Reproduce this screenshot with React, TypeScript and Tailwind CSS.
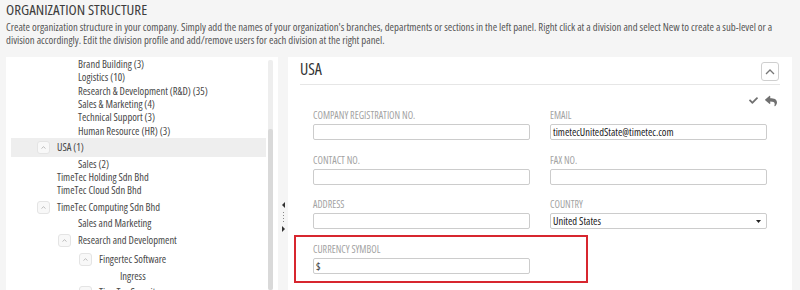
import React from "react";
import { FaCheck, FaReply } from "react-icons/fa";

type Row = {
  label: string;
  h: string;
  pad: string;
  toggle?: boolean;
  active?: boolean;
};

const rows: Row[] = [
  { label: "Brand Building (3)", h: "h-[13px]", pad: "pl-[67px]" },
  { label: "Logistics (10)", h: "h-[13px]", pad: "pl-[67px]" },
  { label: "Research & Development (R&D) (35)", h: "h-[14px]", pad: "pl-[67px]" },
  { label: "Sales & Marketing (4)", h: "h-[13px]", pad: "pl-[67px]" },
  { label: "Technical Support (3)", h: "h-[13px]", pad: "pl-[67px]" },
  { label: "Human Resource (HR) (3)", h: "h-[14px]", pad: "pl-[67px]" },
  { label: "USA (1)", h: "h-[19px]", pad: "pl-[26px]", toggle: true, active: true },
  { label: "Sales (2)", h: "h-[14px]", pad: "pl-[67px]" },
  { label: "TimeTec Holding Sdn Bhd", h: "h-[13px]", pad: "pl-[46px]" },
  { label: "TimeTec Cloud Sdn Bhd", h: "h-[13px]", pad: "pl-[46px]" },
  { label: "TimeTec Computing Sdn Bhd", h: "h-[20px]", pad: "pl-[26px]", toggle: true },
  { label: "Sales and Marketing", h: "h-[13px]", pad: "pl-[67px]" },
  { label: "Research and Development", h: "h-[20px]", pad: "pl-[47px]", toggle: true },
  { label: "Fingertec Software", h: "h-[18px]", pad: "pl-[68px]", toggle: true },
  { label: "Ingress", h: "h-[16px]", pad: "pl-[109px]" },
  { label: "TimeTec Security", h: "h-[16px]", pad: "pl-[68px]", toggle: true },
];

function Toggle() {
  return (
    <span className="w-[13px] h-[13px] mr-[7px] rounded-[3px] border border-[#e4e4e4] bg-[#f8f8f8] flex items-center justify-center shrink-0">
      <svg width="5" height="3" viewBox="0 0 5 3">
        <polyline points="0.5,2.5 2.5,0.7 4.5,2.5" fill="none" stroke="#b5b5b5" strokeWidth="0.9" />
      </svg>
    </span>
  );
}

function Field({ label, value, select }: { label: string; value?: string; select?: boolean }) {
  return (
    <div className="flex flex-col">
      <div className="text-[10px] leading-[14px] text-[#a3a3a3] uppercase mb-[2px]">{label}</div>
      <div className="h-[16px] border border-[#cccccc] rounded-[2px] px-[2px] flex items-center justify-between text-[10.5px] leading-[14px] text-[#222222]">
        <span>{value}</span>
        {select && (
          <svg width="5" height="3" viewBox="0 0 5 3" className="mr-[3px]">
            <polygon points="0,0 5,0 2.5,3" fill="#222222" />
          </svg>
        )}
      </div>
    </div>
  );
}

export default function App() {
  return (
    <div className="w-[800px] h-[290px] overflow-hidden bg-[#f5f5f5] flex flex-col font-['Open_Sans',sans-serif] font-stretch-condensed">
      <div className="px-[6px]">
        <h1 className="text-[15px] leading-[19px] text-[#3d3d3d]">ORGANIZATION STRUCTURE</h1>
        <p className="mt-[2px] text-[10.75px] leading-[13px] text-[#555555] max-w-[788px]">
          Create organization structure in your company. Simply add the names of your organization's branches, departments or sections in the left panel. Right click at a division and select New to create a sub-level or a division accordingly. Edit the division profile and add/remove users for each division at the right panel.
        </p>
      </div>

      <div className="mt-[10px] flex-1 flex pl-[6px] min-h-0">
        {/* Left tree panel */}
        <div className="w-[272px] bg-white flex overflow-hidden">
          <div className="w-[260px] pl-[5px] pt-[1px] text-[10.5px] leading-[13px] text-[#474747]">
            {rows.map((r, i) => (
              <div
                key={i}
                className={`${r.h} ${r.pad} flex items-center whitespace-nowrap ${r.active ? "bg-[#eeeeee]" : ""}`}
              >
                {r.toggle && <Toggle />}
                <span>{r.label}</span>
              </div>
            ))}
          </div>
          <div className="ml-[2px] w-[5px] pt-[3px] flex flex-col">
            <div className="flex-1 rounded-[2px] bg-[#eeeeee] flex flex-col">
              <div className="mt-[69px] flex-1 rounded-[2px] bg-[#d9d9d9]" />
            </div>
          </div>
        </div>

        {/* Splitter */}
        <div className="w-[10px] flex flex-col items-center pt-[145px]">
          <svg width="3" height="6" viewBox="0 0 3 6">
            <polygon points="3,0 0,3 3,6" fill="#333333" />
          </svg>
          <div className="mt-[4px] flex flex-col gap-[2px]">
            <span className="w-[1px] h-[1px] bg-[#888888]" />
            <span className="w-[1px] h-[1px] bg-[#888888]" />
            <span className="w-[1px] h-[1px] bg-[#888888]" />
            <span className="w-[1px] h-[1px] bg-[#888888]" />
          </div>
          <svg width="3" height="6" viewBox="0 0 3 6" className="mt-[4px]">
            <polygon points="0,0 3,3 0,6" fill="#333333" />
          </svg>
        </div>

        {/* Right detail panel */}
        <div className="flex-1 mr-[8px] bg-white px-[12px]">
          <div className="flex justify-between items-start pt-[2px] pb-[3px] border-b border-[#e6e6e6]">
            <div className="text-[16px] leading-[20px] text-[#333333]">USA</div>
            <button className="mt-[3px] mr-[1px] w-[18px] h-[19px] rounded-[3px] border border-[#cfcfcf] bg-white flex items-center justify-center">
              <svg width="10" height="6" viewBox="0 0 10 6">
                <polyline points="1,5 5,1 9,5" fill="none" stroke="#777777" strokeWidth="1.3" />
              </svg>
            </button>
          </div>

          <div className="mt-[10px] h-[11px] flex justify-end items-center gap-[7px] pr-[3px] text-[#707070]">
            <FaCheck size={9} />
            <FaReply size={12} />
          </div>

          <div className="mt-[2px] px-[13px] grid grid-cols-2 gap-x-[20px] gap-y-[12.5px]">
            <Field label="Company Registration No." />
            <Field label="Email" value="timetecUnitedState@timetec.com" />
            <Field label="Contact No." />
            <Field label="Fax No." />
            <Field label="Address" />
            <Field label="Country" value="United States" select />
          </div>

          <div className="mt-[6px] -ml-[6px] w-[294px] border-2 border-[#d7262f] pt-[5px] pl-[17px] pb-[7px]">
            <div className="w-[217px]">
              <Field label="Currency Symbol" value="$" />
            </div>
          </div>
        </div>
      </div>
    </div>
  );
}
